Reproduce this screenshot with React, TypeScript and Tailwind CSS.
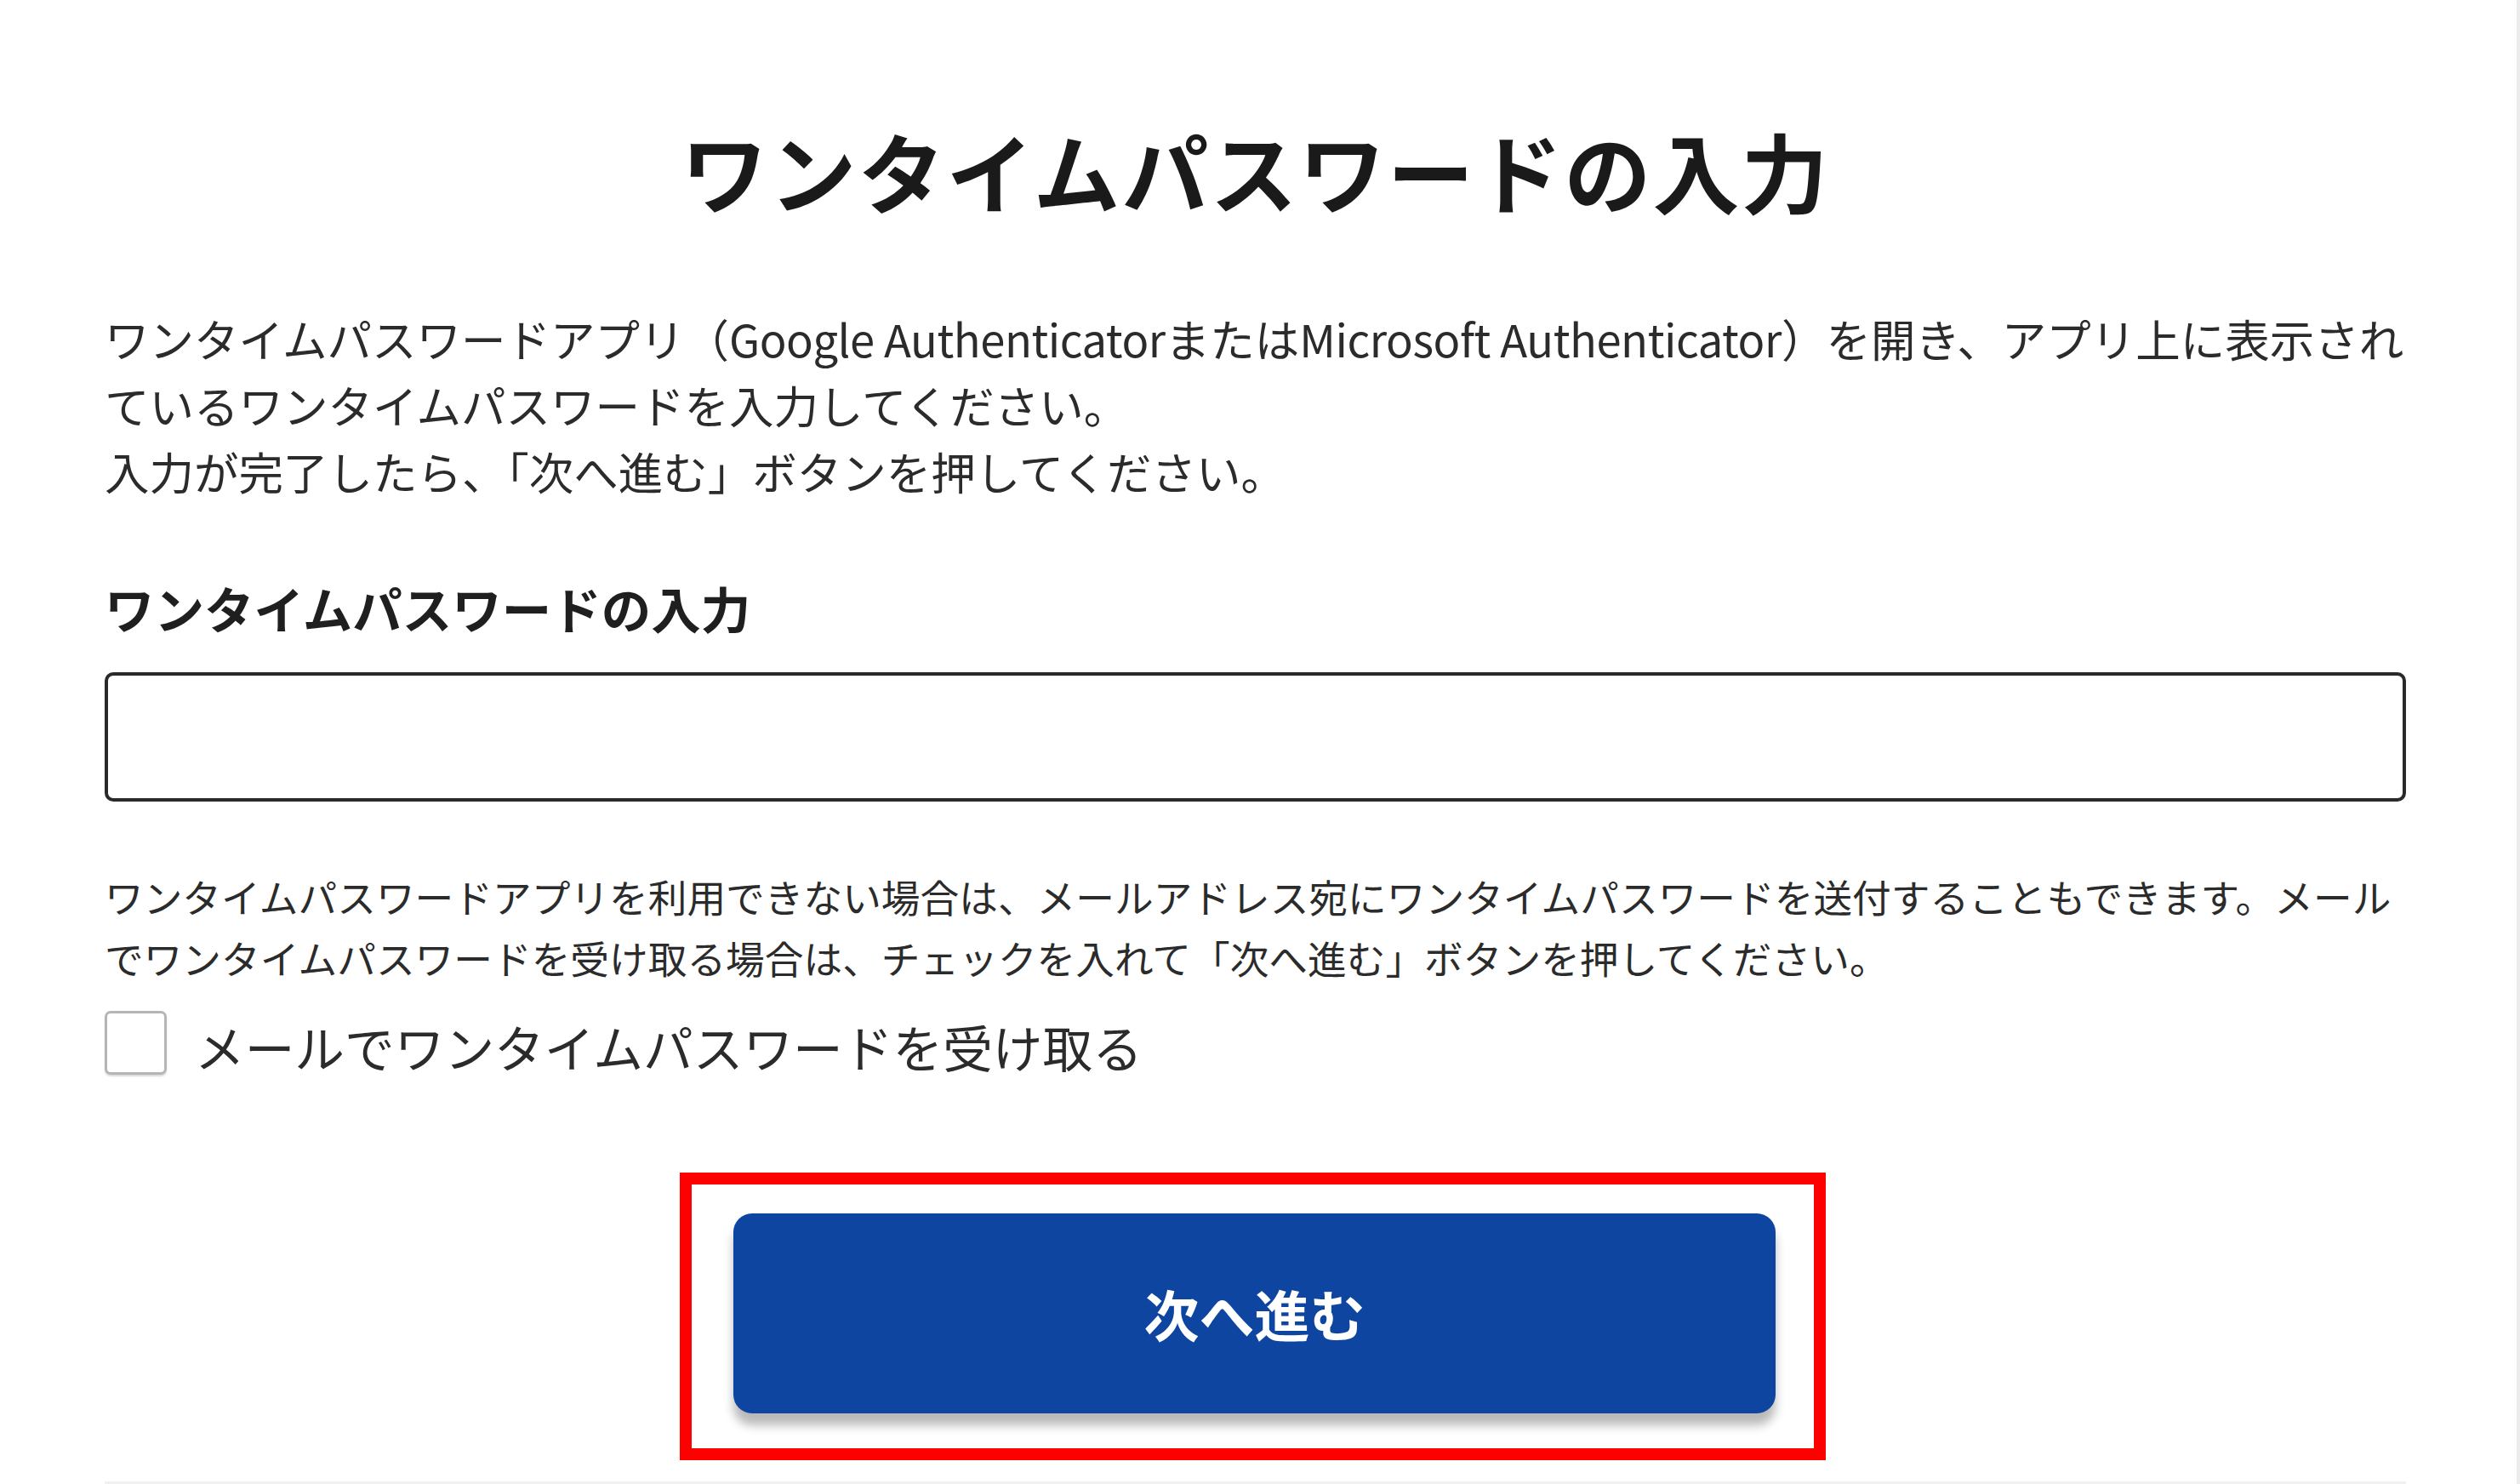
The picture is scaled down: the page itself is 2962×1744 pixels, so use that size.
import React from "react";

export default function App() {
  const font = { fontFamily: '"Noto Sans CJK JP", "Noto Sans", sans-serif' };
  return (
    <div
      className="w-[2962px] h-[1744px] bg-white overflow-hidden flex"
      style={font}
    >
      <div className="flex-1 min-w-0 flex flex-col items-stretch pl-[123px] pr-[130px] border-r-[4px] border-[#ececec]">
        <h1 className="pt-[127px] text-center text-[102px] leading-[146px] font-bold text-[#1a1a1a] tracking-[2px]">
          ワンタイムパスワードの入力
        </h1>

        <p className="mt-[85px] text-[52.5px] leading-[78px] text-[#2b2b2b] whitespace-nowrap">
          ワンタイムパスワードアプリ（<span className="tracking-[-0.45px]">Google Authenticator</span>または<span className="tracking-[-0.45px]">Microsoft Authenticator</span>）を開き、アプリ上に表示され
          <br />
          ているワンタイムパスワードを入力してください。
          <br />
          入力が完了したら、「次へ進む」ボタンを押してください。
        </p>

        <label className="mt-[82px] text-[58.5px] leading-[80px] font-bold text-[#1f1f1f]">
          ワンタイムパスワードの入力
        </label>

        <input
          type="text"
          className="mt-[36px] h-[152px] w-full rounded-[10px] border-[4px] border-[#2a2a2a] bg-white px-6 text-[50px] outline-none"
        />

        <p className="mt-[75px] text-[45.7px] leading-[72px] text-[#2b2b2b] whitespace-nowrap">
          ワンタイムパスワードアプリを利用できない場合は、メールアドレス宛にワンタイムパスワードを送付することもできます。メール
          <br />
          でワンタイムパスワードを受け取る場合は、チェックを入れて「次へ進む」ボタンを押してください。
        </p>

        <div className="mt-[27px] flex items-center h-[75px]">
          <div className="w-[73px] h-[75px] rounded-[7px] border-[3px] border-[#b5b5b5] bg-white shadow-[0_2px_2px_rgba(0,0,0,0.15)]" />
          <span className="ml-[33px] text-[58.7px] leading-[80px] text-[#2b2b2b] mt-[8px]">
            メールでワンタイムパスワードを受け取る
          </span>
        </div>

        <div className="mt-[115px] self-center ml-[-6px] w-[1347px] h-[338px] border-[14px] border-[#ff0000] pt-[34px] pl-[49px]">
          <button className="w-[1225px] h-[235px] rounded-[22px] bg-[#0e45a0] text-white text-[65px] font-bold shadow-[0_14px_12px_rgba(0,0,0,0.28)]">
            次へ進む
          </button>
        </div>

        <div className="mt-auto h-[3px] bg-[#f0f0f0]" />
      </div>
    </div>
  );
}
